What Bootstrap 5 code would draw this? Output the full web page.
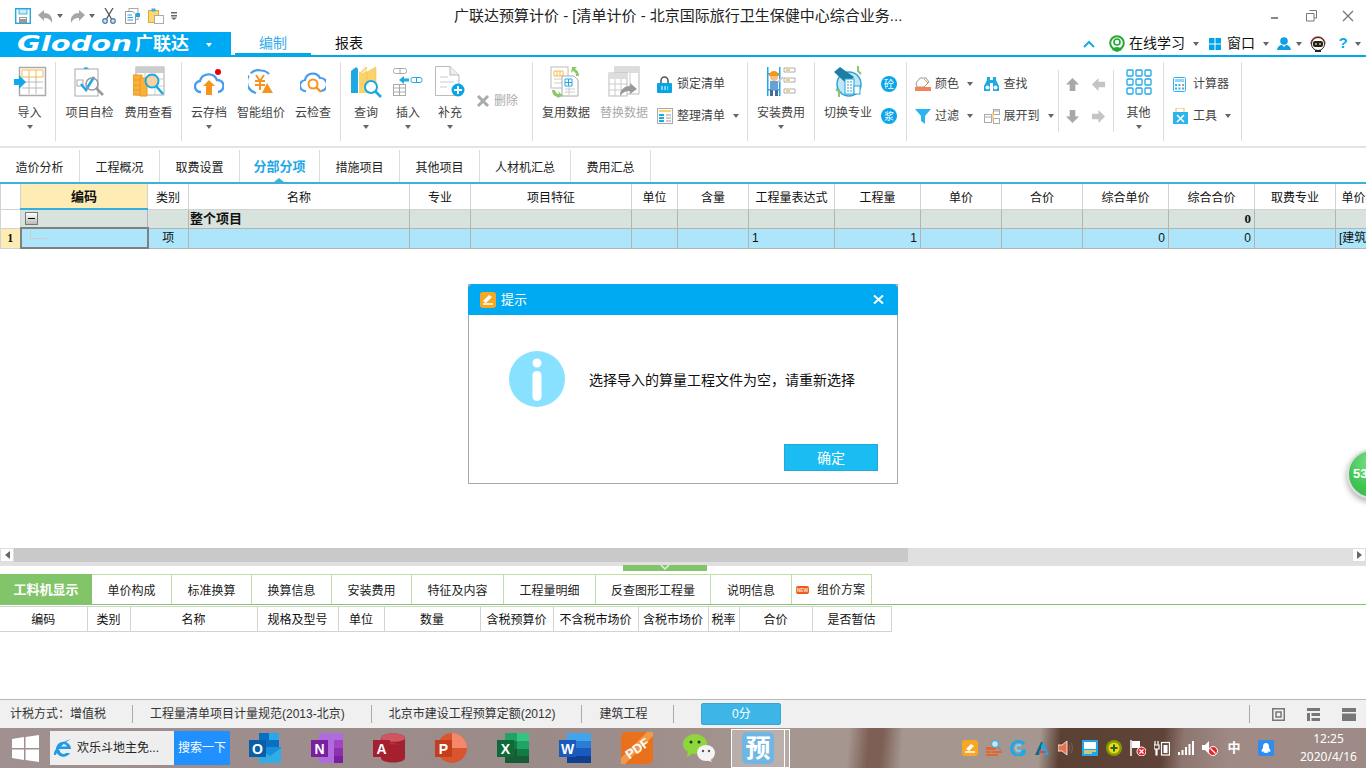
<!DOCTYPE html>
<html lang="zh-CN">
<head>
<meta charset="UTF-8">
<title>广联达预算计价</title>
<link href="https://cdn.jsdelivr.net/npm/bootstrap@5.3.0/dist/css/bootstrap.min.css" rel="stylesheet">
<style>
html, body { width: 1366px; height: 768px; overflow: hidden; margin: 0; }
body { font-family: "Liberation Sans", "Noto Sans CJK SC", sans-serif; font-size: 12px; color: #333; background: #fff; position: relative; }
svg { display: block; flex: none; }
.crt { display: inline-block; width: 0; height: 0; border-left: 3.5px solid transparent; border-right: 3.5px solid transparent; border-top: 4px solid #666; flex: none; }

.title-bar { height: 32px; flex: none; }
.qa-box { width: 454px; padding-left: 15px; flex: none; }
.qa-cell { width: 23px; }
.qa-cell-w { width: 32px; }
.title-txt { font-size: 15px; color: #222; width: 770px; white-space: nowrap; }
.win-btn { width: 36px; }

.top-tabs { height: 25px; border-bottom: 2px solid #00a9ee; flex: none; }
.logo-box { width: 231px; height: 25px; background: #00aaf2; color: #fff; padding-left: 17px; margin-bottom: -2px; flex: none; }
.logo-en { display: inline-block; font-family: "DejaVu Sans", sans-serif; font-weight: 700; font-style: italic; font-size: 21px; line-height: 25px; width: 118px; white-space: nowrap; transform: scaleX(1.38); transform-origin: left center; }
.logo-cn { font-size: 18px; font-weight: 700; line-height: 25px; width: 68px; }
.logo-box .crt { border-top-color: #fff; margin-left: 3px; }
.top-tab { width: 76px; height: 23px; font-size: 14px; line-height: 22px; text-align: center; color: #111; }
.top-tab-on { color: #35ace8; border-bottom: 2px solid #00a9ee; }
.logo-gap { width: 4px; }
.tool-right { font-size: 14px; color: #111; }
.tr-a { width: 16px; margin-right: 10px; }
.tr-b { width: 16px; margin-right: 4px; }
.tr-t1 { width: 56px; margin-right: 8px; }
.tr-b2 { margin: 0 6px 0 10px; }
.tr-t2 { width: 28px; margin-right: 8px; }
.tr-u { margin: 0 5px 0 8px; }
.tr-r { margin: 0 10px 0 8px; }
.tr-q { width: 14px; color: #00a9ee; font-weight: 700; font-size: 15px; margin-right: 5px; text-align: center; }
.tr-end { margin-right: 5px; }

.ribbon { height: 91px; border-bottom: 2px solid #e4e4e4; padding-top: 5px; flex: none; }
.rb-sep { width: 1px; height: 79px; background: #ddd; flex: none; }
.rb-sep-s { width: 1px; height: 62px; margin-top: 8px; background: #ddd; flex: none; }
.g1 { width: 55px; padding-left: 3px; }
.g2 { width: 125px; padding-left: 4px; }
.g3 { width: 158px; padding-left: 1px; }
.g4 { width: 191px; padding-left: 4px; }
.g5 { width: 214px; padding-left: 4px; }
.g6 { width: 66px; }
.g7 { width: 91px; }
.g8 { width: 151px; padding-left: 8px; }
.g9 { width: 54px; padding-left: 6px; }
.g10 { width: 49px; }
.g11 { width: 77px; padding-left: 9px; }
.rb-big { display: flex; flex-direction: column; align-items: center; color: #444; flex: none; padding-top: 3px; }
.rb-ico { height: 33px; display: flex; align-items: center; justify-content: center; }
.rb-lbl { line-height: 16px; margin-top: 7px; white-space: nowrap; }
.rb-big .crt { margin-top: 4px; }
.w53 { width: 53px; } .w59 { width: 59px; } .w52 { width: 52px; } .w42 { width: 42px; } .w58 { width: 58px; } .w66 { width: 66px; } .w49 { width: 49px; }
.rb-off { color: #aaa; }
.rb-del { width: 48px; margin-left: 5px; color: #aaa; padding-top: 30px; gap: 4px; height: 48px; }
.rb-col { display: flex; flex-direction: column; padding-top: 12px; gap: 12px; }
.rb-small { height: 20px; display: flex; align-items: center; white-space: nowrap; color: #444; }
.rs-ico { width: 20px; display: flex; justify-content: flex-start; flex: none; }
.rs-t24 { width: 24px; } .rs-t36 { width: 36px; } .rs-t48 { width: 48px; }
.rs-c { margin-left: 8px; }
.col-a { width: 70px; }
.col-b { width: 76px; }
.col-c { width: 26px; }
.col-d { width: 89px; margin-left: 4px; }
.col-e { width: 25px; }

.sheet-tabs { height: 36px; padding-top: 2px; border-bottom: 2px solid #3fb0dc; position: relative; flex: none; }
.sheet-tab { width: 80px; height: 32px; line-height: 36px; text-align: center; color: #222; border-right: 1px solid #ddd; flex: none; }
.sheet-tab-w { width: 91px; }
.sheet-tab-on { color: #1fa8e6; font-weight: 700; font-size: 13px; line-height: 33px; }
.tab-notch { position: absolute; left: 274px; bottom: 0; width: 0; height: 0; border-left: 5px solid transparent; border-right: 5px solid transparent; border-bottom: 4px solid #3fb0dc; }

.grid-wrap { height: 65px; overflow: hidden; flex: none; }
table.grid-tb { table-layout: fixed; border-collapse: collapse; width: 1419px; margin: 0; color: #111; }
table.grid-tb td { padding: 0 3px; font-size: 12px; line-height: 16px; border: 1px solid #b4b4b4; white-space: nowrap; overflow: hidden; vertical-align: middle; background: transparent; box-shadow: none; }
table.grid-tb tr.h-row td { height: 25px; padding-top: 4px; text-align: center; border-color: #d2d2d2; border-top: 0; background: #fff; }
table.grid-tb tr.h-row td.h-sel { background: #fdedb5; border-bottom: 2px solid #35aee0; font-weight: 700; font-size: 13px; padding-top: 1px; }
table.grid-tb tr.r0 td { height: 19px; background: #d9e3de; }
table.grid-tb tr.r1 td { height: 20px; background: #ade6fa; }
table.grid-tb tr.r0 td.r-h { background: #fff; border-color: #d2d2d2; }
table.grid-tb tr.r1 td.r-h { background: #fdedb5; font-family: "Liberation Serif", serif; font-weight: 700; text-align: center; border-color: #d2d2d2; padding: 0; }
table.grid-tb tr.r1 td.cur-cell { border: 2px solid #808080; padding: 0; }
table.grid-tb td.num-b { font-family: "Liberation Serif", serif; font-weight: 700; text-align: right; font-size: 13px; }
table.grid-tb td.t-r { text-align: right; }
table.grid-tb td.t-c { text-align: center; }
table.grid-tb td.t-l { font-weight: 700; font-size: 13px; padding-left: 1px; }
.tree-btn { width: 13px; height: 13px; border: 1px solid #777; background: linear-gradient(#fff, #bbb); display: flex; align-items: center; justify-content: center; margin-left: 1px; }
.tree-btn i { display: block; width: 7px; height: 1px; background: #000; }
.tree-line { display: block; width: 17px; height: 8px; margin: -6px 0 0 8px; border-left: 1px solid #ccc; border-bottom: 1px solid #ccc; }
.c1 { width: 20px; } .c2 { width: 127px; } .c3 { width: 41px; } .c4 { width: 221px; } .c5 { width: 61px; } .c6 { width: 161px; } .c7 { width: 46px; } .c8 { width: 71px; } .c9 { width: 86px; } .c10 { width: 86px; } .c11 { width: 81px; } .c12 { width: 81px; } .c13 { width: 86px; } .c14 { width: 86px; } .c15 { width: 81px; } .c16 { width: 84px; }

.grid-empty { height: 299px; flex: none; }
.hscroll { height: 14px; background: #e0e0e0; flex: none; }
.hs-btn { width: 14px; height: 14px; background: #fff; border: 1px solid #ddd; display: flex; align-items: center; justify-content: center; flex: none; }
.hs-l { border-right: 5px solid #666; border-top: 4px solid transparent; border-bottom: 4px solid transparent; }
.hs-r { border-left: 5px solid #666; border-top: 4px solid transparent; border-bottom: 4px solid transparent; }
.hs-thumb { width: 894px; height: 14px; background: #c9c9c9; }
.splitter { height: 12px; border-top: 4px solid #e0e0e0; flex: none; }
.split-handle { width: 84px; height: 6px; margin-left: 623px; margin-top: -1px; background: #82c469; display: flex; justify-content: center; }

.low-tabs { height: 31px; border-bottom: 1px solid #82c469; flex: none; }
.low-tab { height: 30px; line-height: 32px; text-align: center; color: #222; border-top: 1px solid #bce0a6; border-right: 1px solid #bce0a6; flex: none; }
.low-on { background: #82c469; color: #fff; font-weight: 700; font-size: 13px; border: 0; width: 92px; }
.lt80 { width: 80px; } .lt92 { width: 92px; } .lt115 { width: 115px; } .lt81 { width: 81px; }
.new-tag { width: 13px; height: 8px; border-radius: 2px; background: #f0591e; color: #ffe3c8; margin: 0 8px 0 4px; flex: none; font-size: 5px; font-weight: 700; line-height: 8px; text-align: center; overflow: hidden; }
.low-last { display: flex; align-items: center; line-height: 16px; }

.sub-wrap { margin-top: 1px; flex: none; }
table.sub-tb { table-layout: fixed; border-collapse: collapse; width: 891px; margin: 0; color: #111; }
table.sub-tb td { height: 25px; padding: 4px 0 0; font-size: 12px; text-align: center; border: 1px solid #d2d2d2; border-left: 0; background: transparent; white-space: nowrap; box-shadow: none; }
.s1 { width: 87px; } .s2 { width: 43px; } .s3 { width: 127px; } .s4 { width: 81px; } .s5 { width: 46px; } .s6 { width: 96px; } .s7 { width: 73px; } .s8 { width: 85px; } .s9 { width: 70px; } .s10 { width: 31px; } .s11 { width: 73px; } .s12 { width: 79px; }

.status-bar { height: 29px; background: #f0f0f0; border-top: 1px solid #b8b8b8; flex: none; color: #333; }
.st-item { padding: 0 26px 0 17px; white-space: nowrap; }
.st-first { padding-left: 10px; }
.st-sep { width: 1px; height: 18px; background: #aaa; flex: none; }
.st-score { width: 80px; height: 22px; line-height: 21px; text-align: center; background: #3db5e6; color: #fff; border: 1px solid #37a6d4; border-radius: 2px; margin-left: 27px; flex: none; }
.st-icons { gap: 22px; margin-left: 22px; margin-right: 10px; }

.task-bar { height: 40px; color: #fff; flex: none; background: linear-gradient(95deg, #a09090 0%, #9a8a88 40%, #a49590 57%, #a59790 62%, #7d5f55 63.500%, #7d5f55 64.500%, #a59790 66%, #a59790 76%, #5b4034 77.500%, #5f4338 85%, #8d7670 86.500%, #a08a85 90%, #9d8a86 100%); }
.win-logo { width: 50px; padding-left: 12px; flex: none; }
.search-box { width: 180px; height: 34px; background: #eee; color: #222; flex: none; }
.sb-ie { margin: 0 4px 0 3px; }
.sb-txt { width: 97px; font-size: 12px; white-space: nowrap; overflow: hidden; }
.sb-btn { width: 56px; height: 34px; line-height: 34px; text-align: center; color: #fff; background: #2090ff; flex: none; margin-left: auto; font-size: 12px; }
.app-cell { width: 62px; flex: none; display: flex; justify-content: center; }
.app-first { margin-left: 4px; }
.app-on { width: 54px; height: 39px; border: 1px solid #fff; background: rgba(255,255,255,.25); display: flex; align-items: center; justify-content: center; flex: none; margin-left: 1px; }
.app-yu { width: 32px; height: 32px; border-radius: 5px; background: #6fb6e3; color: #fff; font-size: 25px; font-weight: 700; line-height: 32px; text-align: center; }
.app-on-r { width: 5px; height: 39px; border: 1px solid #fff; border-left: 0; background: rgba(255,255,255,.2); flex: none; }
.tray { margin-left: auto; }
.tray-cell { width: 24px; display: flex; justify-content: center; flex: none; }
.tray-zh { font-size: 13px; font-weight: 700; line-height: 16px; text-align: center; }
.tray-qq { margin: 0 12px 0 8px; }
.clock { width: 76px; padding-left: 9px; padding-right: 8px; text-align: center; font-family: "Noto Sans", sans-serif; font-size: 12px; line-height: 18px; flex: none; }

.dlg { position: absolute; left: 468px; top: 284px; width: 430px; height: 200px; background: #fff; border: 1px solid #aaa; border-radius: 0; }
.dlg-head { height: 31px; margin: -1px -1px 0; background: #00aaf2; color: #fff; padding: 0 14px 0 12px; border: 0; border-radius: 0; font-size: 13px; }
.dlg-title { margin-left: 5px; }
.dlg-body { padding: 36px 0 0 40px; gap: 24px; }
.dlg-msg { font-size: 14px; color: #111; white-space: nowrap; padding-top: 2px; }
.dlg-ok { position: absolute; left: 315px; top: 159px; width: 94px; height: 27px; padding: 0; background: #19bdf2; border: 1px solid #2aa5d8; border-radius: 0; color: #fff; font-size: 14px; line-height: 27px; }

.ball { position: absolute; left: 1347px; top: 449px; width: 50px; height: 50px; border-radius: 50%; background: radial-gradient(circle at 50% 25%, #7fe08c, #3fc653 60%, #35b54a); border: 2px solid #ddd; box-shadow: 0 3px 6px rgba(0,0,0,.35); color: #fff; font-weight: 700; font-size: 13px; line-height: 46px; padding-left: 4px; }
</style>
</head>
<body class="d-flex flex-column">

<svg width="0" height="0" class="position-absolute">
  <defs>
    <symbol id="i-cloud" viewBox="0 0 30 24"><path d="M7 21a5.500 5.500 0 0 1-1-11 9 9 0 0 1 17-1 6 6 0 0 1 1 12" fill="none" stroke="#4a9cf0" stroke-width="2.400"/></symbol>
    <symbol id="i-arrow-up" viewBox="0 0 16 16"><path d="M8 1 15 8H11V15H5V8H1Z" fill="#a8a8a8"/></symbol>
  </defs>
</svg>

<!-- title bar -->
<div class="title-bar d-flex align-items-center">
  <div class="qa-box d-flex align-items-center">
    <div class="qa-cell">
      <svg width="16" height="16" viewBox="0 0 16 16"><rect x=".7" y=".7" width="14.600" height="14.600" fill="#fff" stroke="#21a8e0" stroke-width="1.400"/><rect x="4" y="1" width="8" height="5" fill="#cfeaf6" stroke="#21a8e0" stroke-width=".8"/><rect x="4" y="9" width="8" height="6" fill="#999"/><rect x="5" y="10" width="6" height="1" fill="#fff"/></svg>
    </div>
    <div class="qa-cell-w d-flex align-items-center gap-1">
      <svg width="15" height="13" viewBox="0 0 15 13"><path d="M0 5 6 0V3C11 3 15 6 14 13 12 9 10 8 6 8V11Z" fill="#a6a6a6"/></svg><i class="crt"></i>
    </div>
    <div class="qa-cell-w d-flex align-items-center gap-1">
      <svg width="15" height="13" viewBox="0 0 15 13"><path d="M15 5 9 0V3C4 3 0 6 1 13 3 9 5 8 9 8V11Z" fill="#a6a6a6"/></svg><i class="crt"></i>
    </div>
    <div class="qa-cell">
      <svg width="14" height="16" viewBox="0 0 14 16"><path d="M3 0 9.500 11M11 0 4.500 11" stroke="#555" stroke-width="1.300"/><circle cx="3" cy="13" r="2.300" fill="#cfe0f0" stroke="#4a7ab0" stroke-width="1.200"/><circle cx="11" cy="13" r="2.300" fill="#cfe0f0" stroke="#4a7ab0" stroke-width="1.200"/></svg>
    </div>
    <div class="qa-cell">
      <svg width="16" height="16" viewBox="0 0 16 16"><rect x="4" y=".5" width="9" height="11" fill="#fff" stroke="#aaa"/><path d="M.5 3.500H8L10.500 6V15.500H.5Z" fill="#fff" stroke="#999"/><path d="M2.500 7H7M2.500 9.500H8M2.500 12H8" stroke="#1fa8e6" stroke-width="1.200"/><path d="M11 5 15 5 15 9 11 9Z" fill="#1fa8e6"/></svg>
    </div>
    <div class="qa-cell">
      <svg width="16" height="16" viewBox="0 0 16 16"><rect x=".5" y="2.500" width="10" height="12" fill="#fcd873" stroke="#d9a93a"/><rect x="3.500" y=".5" width="4" height="3" fill="#35aee0"/><rect x="6.500" y="7.500" width="9" height="8" fill="#fff" stroke="#aaa"/></svg>
    </div>
    <svg width="6" height="8" viewBox="0 0 6 8"><path d="M0 0H6V1.500H0ZM0 3H6V4.500H0ZM0 5.500H6L3 8Z" fill="#666"/></svg>
  </div>
  <div class="title-txt">广联达预算计价 - [清单计价 - 北京国际旅行卫生保健中心综合业务...</div>
  <div class="d-flex align-items-center ms-auto">
    <div class="win-btn d-flex justify-content-center"><svg width="10" height="10" viewBox="0 0 10 10"><rect y="6" width="7" height="2" fill="#888"/></svg></div>
    <div class="win-btn d-flex justify-content-center"><svg width="12" height="12" viewBox="0 0 12 12"><path d="M3.500.5H10.500V8H8M.5 3.500H8V11H.5Z" fill="none" stroke="#777"/></svg></div>
    <div class="win-btn d-flex justify-content-center"><svg width="12" height="12" viewBox="0 0 12 12"><path d="M1 1 11 11M11 1 1 11" stroke="#777" stroke-width="1.300"/></svg></div>
  </div>
</div>

<!-- product logo + top tabs -->
<div class="top-tabs d-flex align-items-center">
  <div class="logo-box d-flex align-items-center">
    <span class="logo-en">Glodon</span><span class="logo-cn">广联达</span><i class="crt"></i>
  </div>
  <div class="logo-gap"></div>
  <div class="top-tab top-tab-on">编制</div>
  <div class="top-tab">报表</div>
  <div class="tool-right d-flex align-items-center ms-auto">
    <div class="tr-a"><svg width="12" height="8" viewBox="0 0 12 8"><path d="M1 7 6 2 11 7" fill="none" stroke="#1fa8e6" stroke-width="2"/></svg></div>
    <div class="tr-b"><svg width="16" height="17" viewBox="0 0 16 17"><circle cx="8" cy="8" r="6.800" fill="none" stroke="#22a833" stroke-width="2"/><circle cx="8" cy="7" r="3" fill="none" stroke="#22a833" stroke-width="1.600"/><path d="M3 15C5 11 11 11 13 15L8 17Z" fill="#22a833"/></svg></div>
    <span class="tr-t1">在线学习</span><i class="crt"></i>
    <div class="tr-b2"><svg width="12" height="12" viewBox="0 0 12 12"><path d="M0 0H5.500V5.500H0ZM6.500 0H12V5.500H6.500ZM0 6.500H5.500V12H0ZM6.500 6.500H12V12H6.500Z" fill="#00a4ea"/></svg></div>
    <span class="tr-t2">窗口</span><i class="crt"></i>
    <div class="tr-u"><svg width="14" height="13" viewBox="0 0 14 13"><circle cx="7" cy="4" r="3.800" fill="#0f9fe6"/><path d="M0 13C1 8 4 8 5 8L7 10 9 8C10 8 13 8 14 13Z" fill="#0f9fe6"/></svg></div><i class="crt"></i>
    <div class="tr-r"><svg width="16" height="16" viewBox="0 0 16 16"><path d="M1 8A7 7 0 0 1 15 8" fill="none" stroke="#c0392b" stroke-width="1.400"/><circle cx="8" cy="8" r="6.500" fill="#fff" stroke="#222"/><rect x="3" y="5" width="10" height="6" rx="2" fill="#222"/><circle cx="6" cy="8" r="1" fill="#f4c430"/><circle cx="10" cy="8" r="1" fill="#f4c430"/><rect x="5" y="14" width="6" height="2" fill="#222"/></svg></div>
    <span class="tr-q">?</span><i class="crt tr-end"></i>
  </div>
</div>

<!-- ribbon -->
<div class="ribbon d-flex">
  <div class="g1 d-flex">
    <div class="rb-big w53">
      <div class="rb-ico"><svg width="34" height="32" viewBox="0 0 34 32"><rect x="6.500" y="1.500" width="26" height="28" fill="#fff" stroke="#aaa" stroke-width="1.500"/><path d="M9 4H30V11H9Z" fill="#fff" stroke="#f7b94a"/><path d="M16 4V11M23 4V11" stroke="#f7b94a"/><path d="M9 16H30M9 22H30M16 11V28M23 11V28" stroke="#bbb"/><path d="M1 13H6V9L13 16 6 23V19H1Z" fill="#11a7ea"/></svg></div>
      <div class="rb-lbl">导入</div><i class="crt"></i>
    </div>
  </div>
  <div class="rb-sep"></div>
  <div class="g2 d-flex">
    <div class="rb-big w59">
      <div class="rb-ico"><svg width="32" height="32" viewBox="0 0 32 32"><rect x="1" y="3" width="23" height="27" fill="#fff" stroke="#aaa"/><path d="M9 3Q12-1 15 3Z" fill="#35aee0"/><rect x="3" y="14" width="6" height="6" fill="none" stroke="#aaa"/><path d="M7 18 12 24 20 11" fill="none" stroke="#1fa8e6" stroke-width="2.500"/><circle cx="18" cy="18" r="6" fill="none" stroke="#999" stroke-width="1.600"/><path d="M22 22 29 29" stroke="#999" stroke-width="2.500"/></svg></div>
      <div class="rb-lbl">项目自检</div>
    </div>
    <div class="rb-big w59">
      <div class="rb-ico"><svg width="32" height="32" viewBox="0 0 32 32"><rect x="3" y="1" width="28" height="28" fill="#fff" stroke="#aaa"/><rect x="3" y="1" width="28" height="6" fill="#ccc"/><path d="M3 13H31M3 20H31M12 7V29M22 7V29" stroke="#ccc"/><path d="M0 9H9V29H0Z" fill="#fbb03b" stroke="#e59a1e"/><path d="M0 14H9M0 19H9M0 24H9" stroke="#e59a1e"/><path d="M7 12H14V30H7Z" fill="#fbb03b" stroke="#e59a1e"/><circle cx="19" cy="15" r="6.500" fill="#f7d3a4" stroke="#19a8e0" stroke-width="2"/><path d="M23 20 30 28" stroke="#19a8e0" stroke-width="2.600"/></svg></div>
      <div class="rb-lbl">费用查看</div>
    </div>
  </div>
  <div class="rb-sep"></div>
  <div class="g3 d-flex">
    <div class="rb-big w52">
      <div class="rb-ico"><svg width="30" height="28" viewBox="0 0 30 28"><use href="#i-cloud" y="3" width="30" height="24"/><path d="M15 12 21 18H18V27H12V18H9Z" fill="#f7941d"/><circle cx="24" cy="4" r="3" fill="#e60012"/></svg></div>
      <div class="rb-lbl">云存档</div><i class="crt"></i>
    </div>
    <div class="rb-big w52">
      <div class="rb-ico"><svg width="26" height="26" viewBox="0 0 26 26"><path d="M8 24A11.500 11.500 0 0 1 13 1.500 11 11 0 0 1 21 5" fill="none" stroke="#4a9cf0" stroke-width="2.200" stroke-dasharray="22 3"/><path d="M8 6 12 12 16 6M7 12H17M7 16H17M12 12V21" fill="none" stroke="#f7941d" stroke-width="2"/><path d="M19 14 25 24H14Z" fill="#f7941d"/></svg></div>
      <div class="rb-lbl">智能组价</div>
    </div>
    <div class="rb-big w52">
      <div class="rb-ico"><svg width="26" height="22" viewBox="0 0 26 22"><path d="M6 20A5 5 0 0 1 5 9 8 8 0 0 1 20 7 6.500 6.500 0 0 1 21 20" fill="none" stroke="#4a9cf0" stroke-width="2.200"/><circle cx="13" cy="13" r="4.500" fill="#fff" stroke="#f7941d" stroke-width="2"/><path d="M16 16 21 21" stroke="#f7941d" stroke-width="2.400"/></svg></div>
      <div class="rb-lbl">云检查</div>
    </div>
  </div>
  <div class="rb-sep"></div>
  <div class="g4 d-flex">
    <div class="rb-big w42">
      <div class="rb-ico"><svg width="32" height="32" viewBox="0 0 32 32"><path d="M1 5 6 1 8 3V27H1Z" fill="#1fa8e6"/><path d="M9 6 15 1H17V27H9Z" fill="#fbd36b"/><path d="M17 6 26 1V20H17Z" fill="#fbd36b" stroke="#e5b84a" stroke-width=".5"/><path d="M10 6 15 2M12 7 18 3" stroke="#fff"/><circle cx="21" cy="21" r="6" fill="#fff" stroke="#19a8e0" stroke-width="2"/><path d="M25 25 31 31" stroke="#19a8e0" stroke-width="2.600"/></svg></div>
      <div class="rb-lbl">查询</div><i class="crt"></i>
    </div>
    <div class="rb-big w42">
      <div class="rb-ico"><svg width="30" height="28" viewBox="0 0 30 28"><rect x=".5" y=".5" width="13" height="5" rx="2" fill="#fff" stroke="#aaa"/><path d="M7 1V5" stroke="#aaa"/><rect x="18" y="9.500" width="11" height="5" rx="2" fill="#fff" stroke="#1fa8e6"/><path d="M23.500 10V14" stroke="#1fa8e6"/><path d="M6 12 11 8V10.500H16V13.500H11V16Z" fill="#1fa8e6"/><rect x=".5" y="16.500" width="12" height="11" fill="#fff" stroke="#aaa"/><path d="M1 20H12M1 24H12M6.500 17V27" stroke="#aaa"/></svg></div>
      <div class="rb-lbl">插入</div><i class="crt"></i>
    </div>
    <div class="rb-big w42">
      <div class="rb-ico"><svg width="30" height="32" viewBox="0 0 30 32"><path d="M.5.500H15L24 9V29.500H.5Z" fill="#fff" stroke="#bbb"/><path d="M15 .5V9H24" fill="#eee" stroke="#bbb"/><path d="M5 11H13M5 16H19M5 21H12" stroke="#ddd" stroke-width="1.500"/><circle cx="23" cy="24" r="6.500" fill="#08a4e8"/><path d="M23 20V28M19 24H27" stroke="#fff" stroke-width="2"/></svg></div>
      <div class="rb-lbl">补充</div><i class="crt"></i>
    </div>
    <div class="rb-del d-flex align-items-center">
      <svg width="14" height="14" viewBox="0 0 14 14"><path d="M2 2 12 12M12 2 2 12" stroke="#aaa" stroke-width="3"/></svg>
      <span>删除</span>
    </div>
  </div>
  <div class="rb-sep"></div>
  <div class="g5 d-flex">
    <div class="rb-big w58">
      <div class="rb-ico"><svg width="32" height="32" viewBox="0 0 32 32"><rect x="1" y="1" width="17" height="21" fill="#fff" stroke="#bbb"/><path d="M4 5H13V10H4ZM7 5V10M10 5V10" fill="none" stroke="#f7b94a"/><path d="M4 13H14M4 17H14" stroke="#ccc"/><path d="M12 10H24L28 14V30H12Z" fill="#fff" stroke="#aaa"/><path d="M15 13H22V20H15ZM18.500 13V20M15 16.500H22" fill="none" stroke="#1fa8e6"/><path d="M15 23H25M15 26H25M19 20V29" stroke="#ccc"/><path d="M22 1 27 1 25 3C27 4 29 6 29 10H26C26 7 25 6 23 5L21 7Z" fill="#8cc76b"/><path d="M2 24H5C5 26 7 28 9 28L8 25 13 30 7 32 8 31C4 31 2 27 2 24Z" fill="#8cc76b"/></svg></div>
      <div class="rb-lbl">复用数据</div>
    </div>
    <div class="rb-big w58 rb-off">
      <div class="rb-ico"><svg width="32" height="32" viewBox="0 0 32 32"><rect x="7" y="1" width="24" height="27" fill="#fff" stroke="#bbb"/><rect x="7" y="1" width="24" height="6" fill="#ddd"/><rect x="1" y="7" width="18" height="23" fill="#fff" stroke="#bbb"/><rect x="1" y="7" width="18" height="6" fill="#ddd"/><path d="M1 18H19M1 24H19M7 13V30M13 13V30M22 7V28" stroke="#ccc"/><path d="M12 30C12 23 17 20 22 20V17L29 23 22 28V25C18 25 15 26 12 30Z" fill="#999"/></svg></div>
      <div class="rb-lbl">替换数据</div>
    </div>
    <div class="rb-col col-d">
      <div class="rb-small"><div class="rs-ico"><svg width="15" height="17" viewBox="0 0 15 17"><path d="M4 7V4.500A3.500 3.500 0 0 1 11 4.500V7" fill="none" stroke="#555" stroke-width="1.500"/><rect y="7" width="15" height="10" rx="1" fill="#08a4e8"/><path d="M4 11H11M4 13H11" stroke="#fff" stroke-dasharray="2 1"/></svg></div><span class="rs-t48">锁定清单</span></div>
      <div class="rb-small"><div class="rs-ico"><svg width="16" height="16" viewBox="0 0 16 16"><rect x=".5" y=".5" width="15" height="15" fill="#fff" stroke="#aaa"/><rect x="2" y="2" width="12" height="2" fill="#fbd36b"/><path d="M2 6H7V8H2ZM2 9H7V11H2ZM2 12H7V14H2Z" fill="#1fa8e6"/><path d="M9 6H14V8H9ZM9 9H14V11H9ZM9 12H14V14H9Z" fill="#ccc"/></svg></div><span class="rs-t48">整理清单</span><i class="crt rs-c"></i></div>
    </div>
  </div>
  <div class="rb-sep"></div>
  <div class="g6 d-flex">
    <div class="rb-big w66">
      <div class="rb-ico"><svg width="30" height="30" viewBox="0 0 30 30"><path d="M1 0H2.500V29H1ZM13 0H14.500V29H13ZM1 6H14.500V7.500H1ZM1 22H14.500V23.500H1Z" fill="#1fa8e6"/><circle cx="8" cy="10" r="4" fill="#f7c08a"/><path d="M3 9A5 5 0 0 1 13 9Z" fill="#f7941d"/><rect x="4" y="14" width="8" height="9" fill="#6a9fd8"/><path d="M4 23H7V29H4ZM9 23H12V29H9Z" fill="#4a6a9a"/><path d="M12 15 17 10" stroke="#ccc" stroke-width="2"/><path d="M18 1H29V5H18ZM18 11H29V15H18ZM18 22H29V26H18Z" fill="#fff" stroke="#999" stroke-width=".8"/><path d="M20 3H24M20 13H24M20 24H24" stroke="#f7b94a" stroke-width="1.500"/></svg></div>
      <div class="rb-lbl">安装费用</div><i class="crt"></i>
    </div>
  </div>
  <div class="rb-sep"></div>
  <div class="g7 d-flex">
    <div class="rb-big w66">
      <div class="rb-ico"><svg width="32" height="32" viewBox="0 0 32 32"><circle cx="17" cy="18" r="12" fill="#bfe7f7" stroke="#2aa5d8" stroke-width="1.500"/><path d="M2 6 8 1 22 11 15 18Z" fill="#1d7ea3"/><rect x="13" y="13" width="9" height="15" fill="#fff" stroke="#2aa5d8"/><rect x="22" y="20" width="6" height="8" fill="#fff" stroke="#2aa5d8"/><path d="M15 16H20M15 19H20M15 22H20M15 25H20" stroke="#2aa5d8" stroke-dasharray="2 1"/><path d="M26 0V5L29 8" fill="none" stroke="#8cc76b" stroke-width="2"/><path d="M7 31V26L4 23" fill="none" stroke="#8cc76b" stroke-width="2"/></svg></div>
      <div class="rb-lbl">切换专业</div>
    </div>
    <div class="rb-col col-e">
      <div class="rb-small"><svg width="16" height="16" viewBox="0 0 16 16"><circle cx="8" cy="8" r="8" fill="#0aa5ea"/><text x="8" y="11.500" font-size="10" fill="#fff" text-anchor="middle" font-family="Noto Sans CJK SC">砼</text></svg></div>
      <div class="rb-small"><svg width="16" height="16" viewBox="0 0 16 16"><circle cx="8" cy="8" r="8" fill="#0aa5ea"/><text x="8" y="11.500" font-size="10" fill="#fff" text-anchor="middle" font-family="Noto Sans CJK SC">浆</text></svg></div>
    </div>
  </div>
  <div class="rb-sep"></div>
  <div class="g8 d-flex">
    <div class="rb-col col-a">
      <div class="rb-small"><div class="rs-ico"><svg width="16" height="16" viewBox="0 0 16 16"><path d="M5 2 11 2 14 6 9 11H2L1 7Z" fill="#fff" stroke="#999"/><path d="M9 3 13 7" stroke="#f7941d"/><rect y="11" width="16" height="4" fill="#f5835a"/></svg></div><span class="rs-t24">颜色</span><i class="crt rs-c"></i></div>
      <div class="rb-small"><div class="rs-ico"><svg width="16" height="15" viewBox="0 0 16 15"><path d="M0 0H16L10 7V15L6 12V7Z" fill="#2cb4ee"/></svg></div><span class="rs-t24">过滤</span><i class="crt rs-c"></i></div>
    </div>
    <div class="rb-col col-b">
      <div class="rb-small"><div class="rs-ico"><svg width="15" height="14" viewBox="0 0 15 14"><path d="M3 0H6V3H9V0H12V3L15 9V14H9V6H6V14H0V9L3 3Z" fill="#1fa8e6"/><circle cx="3.500" cy="10.500" r="2" fill="#fff"/><circle cx="11.500" cy="10.500" r="2" fill="#fff"/></svg></div><span class="rs-t24">查找</span></div>
      <div class="rb-small"><div class="rs-ico"><svg width="16" height="15" viewBox="0 0 16 15"><rect x=".5" y="5.500" width="7" height="8" fill="#fff" stroke="#aaa"/><rect x="9.500" y=".5" width="6" height="5" fill="#fff" stroke="#aaa"/><rect x="9.500" y="9.500" width="6" height="5" fill="#fff" stroke="#aaa"/><path d="M0 8H8M10 2H15" stroke="#aaa"/><path d="M7 8H9V3M9 12V8" fill="none" stroke="#f7b94a"/></svg></div><span class="rs-t36">展开到</span><i class="crt rs-c"></i></div>
    </div>
  </div>
  <div class="rb-sep-s"></div>
  <div class="g9 d-flex">
    <div class="rb-col col-c">
      <div class="rb-small"><svg width="15" height="15" viewBox="0 0 16 16"><use href="#i-arrow-up" width="16" height="16"/></svg></div>
      <div class="rb-small"><svg width="15" height="15" viewBox="0 0 16 16"><path d="M8 15 1 8H5V1H11V8H15Z" fill="#a8a8a8"/></svg></div>
    </div>
    <div class="rb-col">
      <div class="rb-small"><svg width="15" height="15" viewBox="0 0 16 16"><path d="M1 8 8 1V5H15V11H8V15Z" fill="#c4c4c4"/></svg></div>
      <div class="rb-small"><svg width="15" height="15" viewBox="0 0 16 16"><path d="M15 8 8 1V5H1V11H8V15Z" fill="#c4c4c4"/></svg></div>
    </div>
  </div>
  <div class="rb-sep-s"></div>
  <div class="g10 d-flex">
    <div class="rb-big w49">
      <div class="rb-ico"><svg width="26" height="26" viewBox="0 0 26 26"><g fill="none" stroke="#1fa8e6" stroke-width="1.300"><rect x="1" y="1" width="6" height="6" rx="1"/><rect x="10" y="1" width="6" height="6" rx="1"/><rect x="19" y="1" width="6" height="6" rx="1"/><rect x="1" y="10" width="6" height="6" rx="1"/><rect x="10" y="10" width="6" height="6" rx="1"/><rect x="19" y="10" width="6" height="6" rx="1"/><rect x="1" y="19" width="6" height="6" rx="1"/><rect x="10" y="19" width="6" height="6" rx="1"/><rect x="19" y="19" width="6" height="6" rx="1"/></g></svg></div>
      <div class="rb-lbl">其他</div><i class="crt"></i>
    </div>
  </div>
  <div class="rb-sep"></div>
  <div class="g11">
    <div class="rb-col">
      <div class="rb-small"><div class="rs-ico"><svg width="13" height="15" viewBox="0 0 13 15"><rect x=".5" y=".5" width="12" height="14" rx="1" fill="#fff" stroke="#2cb4ee"/><rect x="2" y="2" width="9" height="3" fill="#8fd8f7"/><path d="M2 7H4V9H2ZM5.500 7H7.500V9H5.500ZM2 10.500H4V12.500H2ZM5.500 10.500H7.500V12.500H5.500ZM9 10.500H11V12.500H9Z" fill="#2cb4ee"/><rect x="9" y="7" width="2" height="2" fill="#f5835a"/></svg></div><span class="rs-t36">计算器</span></div>
      <div class="rb-small"><div class="rs-ico"><svg width="15" height="16" viewBox="0 0 15 16"><rect x="3" y="0" width="8" height="8" fill="#fff" stroke="#f7b94a"/><rect y="4" width="15" height="12" fill="#2cb4ee"/><path d="M4 7 11 14M11 7 4 14" stroke="#fff" stroke-width="1.600"/></svg></div><span class="rs-t24">工具</span><i class="crt rs-c"></i></div>
    </div>
  </div>
  <div class="rb-sep"></div>
</div>

<!-- sheet tabs -->
<div class="sheet-tabs d-flex">
  <div class="sheet-tab">造价分析</div>
  <div class="sheet-tab">工程概况</div>
  <div class="sheet-tab">取费设置</div>
  <div class="sheet-tab sheet-tab-on">分部分项</div>
  <div class="sheet-tab">措施项目</div>
  <div class="sheet-tab">其他项目</div>
  <div class="sheet-tab sheet-tab-w">人材机汇总</div>
  <div class="sheet-tab">费用汇总</div>
  <span class="tab-notch"></span>
</div>

<!-- main grid -->
<div class="grid-wrap">
  <table class="table grid-tb">
    <colgroup><col class="c1"><col class="c2"><col class="c3"><col class="c4"><col class="c5"><col class="c6"><col class="c7"><col class="c8"><col class="c9"><col class="c10"><col class="c11"><col class="c12"><col class="c13"><col class="c14"><col class="c15"><col class="c16"></colgroup>
    <tbody>
      <tr class="h-row"><td></td><td class="h-sel">编码</td><td>类别</td><td>名称</td><td>专业</td><td>项目特征</td><td>单位</td><td>含量</td><td>工程量表达式</td><td>工程量</td><td>单价</td><td>合价</td><td>综合单价</td><td>综合合价</td><td>取费专业</td><td>单价构成文件</td></tr>
      <tr class="r0"><td class="r-h"></td><td><span class="tree-btn"><i></i></span></td><td></td><td class="t-l">整个项目</td><td></td><td></td><td></td><td></td><td></td><td></td><td></td><td></td><td></td><td class="num-b">0</td><td></td><td></td></tr>
      <tr class="r1"><td class="r-h">1</td><td class="cur-cell"><span class="tree-line"></span></td><td class="t-c">项</td><td></td><td></td><td></td><td></td><td></td><td>1</td><td class="t-r">1</td><td></td><td></td><td class="t-r">0</td><td class="t-r">0</td><td></td><td>[建筑工程]</td></tr>
    </tbody>
  </table>
</div>

<div class="grid-empty"></div>

<!-- horizontal scrollbar -->
<div class="hscroll d-flex">
  <div class="hs-btn"><i class="hs-l"></i></div>
  <div class="hs-thumb"></div>
  <div class="hs-btn ms-auto"><i class="hs-r"></i></div>
</div>
<div class="splitter">
  <div class="split-handle"><svg width="12" height="6" viewBox="0 0 12 6"><path d="M2 0 6 4 10 0" fill="none" stroke="#e3f3da" stroke-width="1.500"/></svg></div>
</div>

<!-- lower tabs -->
<div class="low-tabs d-flex">
  <div class="low-tab low-on">工料机显示</div>
  <div class="low-tab lt80">单价构成</div>
  <div class="low-tab lt80">标准换算</div>
  <div class="low-tab lt80">换算信息</div>
  <div class="low-tab lt80">安装费用</div>
  <div class="low-tab lt92">特征及内容</div>
  <div class="low-tab lt92">工程量明细</div>
  <div class="low-tab lt115">反查图形工程量</div>
  <div class="low-tab lt81">说明信息</div>
  <div class="low-tab lt80 low-last"><span class="new-tag">NEW</span><span>组价方案</span></div>
</div>

<div class="sub-wrap">
  <table class="table sub-tb">
    <colgroup><col class="s1"><col class="s2"><col class="s3"><col class="s4"><col class="s5"><col class="s6"><col class="s7"><col class="s8"><col class="s9"><col class="s10"><col class="s11"><col class="s12"></colgroup>
    <tbody><tr><td>编码</td><td>类别</td><td>名称</td><td>规格及型号</td><td>单位</td><td>数量</td><td>含税预算价</td><td>不含税市场价</td><td>含税市场价</td><td>税率</td><td>合价</td><td>是否暂估</td></tr></tbody>
  </table>
</div>

<div class="flex-grow-1"></div>

<!-- status bar -->
<div class="status-bar d-flex align-items-center">
  <div class="st-item st-first">计税方式：增值税</div><div class="st-sep"></div>
  <div class="st-item">工程量清单项目计量规范(2013-北京)</div><div class="st-sep"></div>
  <div class="st-item">北京市建设工程预算定额(2012)</div><div class="st-sep"></div>
  <div class="st-item">建筑工程</div><div class="st-sep"></div>
  <div class="st-score">0分</div>
  <div class="st-sep ms-auto"></div>
  <div class="d-flex align-items-center st-icons">
    <svg width="13" height="13" viewBox="0 0 13 13"><rect x=".75" y=".75" width="11.500" height="11.500" fill="none" stroke="#777" stroke-width="1.500"/><rect x="4" y="4" width="5" height="5" fill="none" stroke="#777" stroke-width="1.500"/></svg>
    <svg width="13" height="13" viewBox="0 0 13 13"><path d="M0 0H13V3H0ZM0 5H3V13H0ZM4.500 5H13V8H4.500ZM4.500 10H13V13H4.500Z" fill="#777"/></svg>
    <svg width="14" height="13" viewBox="0 0 14 13"><path d="M0 0H14V4H0ZM0 5.500H14V13H0Z" fill="#777"/></svg>
  </div>
</div>

<!-- windows taskbar -->
<div class="task-bar d-flex align-items-center">
  <div class="win-logo"><svg width="27" height="27" viewBox="0 0 27 27"><path d="M0 4 12 2V13H0ZM13.500 2 27 0V13H13.500ZM0 14.500H12V25L0 23ZM13.500 14.500H27V27L13.500 25Z" fill="#fff"/></svg></div>
  <div class="search-box d-flex align-items-center">
    <div class="sb-ie"><svg width="20" height="20" viewBox="0 0 20 20"><path d="M3 11H18A7.500 7.500 0 1 0 17 15H13A4 4 0 0 1 6.500 12M7 8.500C7.500 5 13 5 14 8.500Z" fill="#1d9be8" fill-rule="evenodd"/><path d="M1 17C0 12 8 4 18 1 12 4 5 10 3 17Z" fill="#1d9be8"/></svg></div>
    <span class="sb-txt">欢乐斗地主免...</span>
    <div class="sb-btn">搜索一下</div>
  </div>
  <div class="app-cell app-first"><svg width="32" height="30" viewBox="0 0 32 30"><path d="M10 0H30V14H10Z" fill="#0a6fc2"/><path d="M20 0H30V7H20Z" fill="#28a8ea"/><path d="M10 14 32 14V30H10Z" fill="#1490df"/><path d="M10 15 21 23 32 15V30H10Z" fill="#50c8f0" fill-opacity=".5"/><rect y="7" width="17" height="17" fill="#0a5ea8"/><text x="8.500" y="20.500" font-size="14" font-weight="700" fill="#fff" text-anchor="middle" font-family="Liberation Sans">O</text></svg></div>
  <div class="app-cell"><svg width="32" height="30" viewBox="0 0 32 30"><path d="M8 0H32V30H8Z" fill="#b06cdc"/><path d="M23 7H32V15H23Z" fill="#a046c4"/><path d="M23 15H32V23H23Z" fill="#8c30b0"/><path d="M23 23H32V30H23Z" fill="#7a1fa0"/><rect y="7" width="17" height="17" fill="#7a1fa0"/><text x="8.500" y="20.500" font-size="14" font-weight="700" fill="#fff" text-anchor="middle" font-family="Liberation Sans">N</text></svg></div>
  <div class="app-cell"><svg width="32" height="30" viewBox="0 0 32 30"><path d="M8 5C8-1 32-1 32 5V25C32 31 8 31 8 25Z" fill="#a4202e"/><path d="M8 5C8-1 32-1 32 5 32 10 8 10 8 5Z" fill="#cf5560"/><path d="M8 5C8 10 32 10 32 15 32 10 8 10 8 15Z" fill="#c03040"/><rect y="7" width="17" height="17" fill="#a4202e"/><text x="8.500" y="20.500" font-size="14" font-weight="700" fill="#fff" text-anchor="middle" font-family="Liberation Sans">A</text></svg></div>
  <div class="app-cell"><svg width="32" height="30" viewBox="0 0 32 30"><circle cx="17" cy="15" r="15" fill="#d9552f"/><path d="M17 0A15 15 0 0 1 32 15H17Z" fill="#f5876a"/><rect y="7" width="17" height="17" fill="#c43e1c"/><text x="8.500" y="20.500" font-size="14" font-weight="700" fill="#fff" text-anchor="middle" font-family="Liberation Sans">P</text></svg></div>
  <div class="app-cell"><svg width="32" height="30" viewBox="0 0 32 30"><path d="M8 0H20V8H8Z" fill="#21a366"/><path d="M20 0H32V8H20Z" fill="#33c481"/><path d="M8 8H20V16H8Z" fill="#107c41"/><path d="M20 8H32V16H20Z" fill="#21a366"/><path d="M8 16H20V23H8Z" fill="#185c37"/><path d="M20 16H32V23H20Z" fill="#107c41"/><path d="M8 23H32V30H8Z" fill="#185c37"/><rect y="7" width="17" height="17" fill="#0e6a38"/><text x="8.500" y="20.500" font-size="14" font-weight="700" fill="#fff" text-anchor="middle" font-family="Liberation Sans">X</text></svg></div>
  <div class="app-cell"><svg width="32" height="30" viewBox="0 0 32 30"><path d="M8 0H32V8H8Z" fill="#41a5ee"/><path d="M8 8H32V15H8Z" fill="#2b7cd3"/><path d="M8 15H32V23H8Z" fill="#185abd"/><path d="M8 23H32V30H8Z" fill="#103f91"/><rect y="7" width="17" height="17" fill="#185abd"/><text x="8.500" y="20.500" font-size="14" font-weight="700" fill="#fff" text-anchor="middle" font-family="Liberation Sans">W</text></svg></div>
  <div class="app-cell"><svg width="32" height="32" viewBox="0 0 32 32"><rect width="32" height="32" rx="5" fill="#e9711c"/><path d="M0 26 26 0H32V4L4 32H0Z" fill="#f39a4a"/><text x="16" y="21" font-size="13" font-weight="700" fill="#fff" text-anchor="middle" font-family="Liberation Sans" transform="rotate(-35 16 16)">PDF</text></svg></div>
  <div class="app-cell"><svg width="32" height="28" viewBox="0 0 32 28"><ellipse cx="12" cy="10" rx="12" ry="10" fill="#8ed639"/><path d="M5 17 4 23 11 19Z" fill="#8ed639"/><circle cx="8" cy="8" r="1.500" fill="#234"/><circle cx="16" cy="8" r="1.500" fill="#234"/><ellipse cx="23" cy="19" rx="9" ry="8" fill="#f4f4f4"/><path d="M27 25 29 28 23 26Z" fill="#f4f4f4"/><circle cx="20" cy="17" r="1.200" fill="#555"/><circle cx="26" cy="17" r="1.200" fill="#555"/></svg></div>
  <div class="app-on"><div class="app-yu">预</div></div>
  <div class="app-on-r"></div>
  <div class="tray d-flex align-items-center">
    <div class="tray-cell"><svg width="16" height="16" viewBox="0 0 16 16"><rect width="16" height="16" rx="3" fill="#f7a823"/><path d="M4 9 9 4 12 6 7 11Z" fill="#fff"/><path d="M3 12H13" stroke="#fff" stroke-width="1.500"/></svg></div>
    <div class="tray-cell"><svg width="16" height="16" viewBox="0 0 16 16"><path d="M0 7H10V10H0ZM0 11H5V13H0ZM6 11H16V13H6ZM0 14H12V16H0Z" fill="#e8652a"/><circle cx="9" cy="4" r="3.500" fill="#bfe7f7" stroke="#2aa5d8"/><path d="M12 7 15 10" stroke="#888" stroke-width="1.500"/></svg></div>
    <div class="tray-cell"><svg width="16" height="16" viewBox="0 0 16 16"><path d="M14 4A7 7 0 1 0 15 11H9" fill="none" stroke="#1fa8e6" stroke-width="3"/><path d="M11 6A3 3 0 1 0 11 10" fill="none" stroke="#7fd0f5" stroke-width="2"/></svg></div>
    <div class="tray-cell"><svg width="14" height="15" viewBox="0 0 14 15"><path d="M0 14 6 1H8L4 14Z" fill="#0a6e8a"/><path d="M8 1 14 14H10L6 5Z" fill="#1fa8e6"/><path d="M4 10H11V12H4Z" fill="#d45"/></svg></div>
    <div class="tray-cell"><svg width="16" height="16" viewBox="0 0 16 16"><path d="M0 5H4L9 1V15L4 11H0Z" fill="#e8714f" stroke="#fff" stroke-width=".8"/><path d="M11 5Q13 8 11 11M13 3Q16 8 13 13" fill="none" stroke="#7d5a4e" stroke-width="1.200"/></svg></div>
    <div class="tray-cell"><svg width="16" height="16" viewBox="0 0 16 16"><rect width="16" height="16" fill="#1fa8e6"/><rect x="2" y="2" width="12" height="7" fill="#fff"/><path d="M2 11H14M2 13H10" stroke="#fbd36b" stroke-width="1.500"/></svg></div>
    <div class="tray-cell"><svg width="16" height="16" viewBox="0 0 16 16"><circle cx="8" cy="8" r="8" fill="#7f9d00"/><circle cx="8" cy="8" r="5.500" fill="#f6d31a"/><path d="M8 4.500V11.500M4.500 8H11.500" stroke="#1e6c1e" stroke-width="2"/></svg></div>
    <div class="tray-cell"><svg width="16" height="16" viewBox="0 0 16 16"><path d="M1 0V16" stroke="#fff" stroke-width="1.500"/><path d="M2 1H10V8H2Z" fill="#fff"/><circle cx="11.500" cy="11.500" r="4.500" fill="#e0262c" stroke="#fff"/><path d="M9.500 9.500 13.500 13.500M13.500 9.500 9.500 13.500" stroke="#fff" stroke-width="1.300"/></svg></div>
    <div class="tray-cell"><svg width="16" height="16" viewBox="0 0 16 16"><path d="M1 1V5M4 1V5M0 5H5V9H3V15H2V9H0Z" fill="none" stroke="#fff" stroke-width="1.200"/><rect x="7.500" y="2.500" width="8" height="12.500" fill="none" stroke="#fff" stroke-width="1.200"/><rect x="9.500" y="5" width="4" height="8" fill="#fff"/></svg></div>
    <div class="tray-cell"><svg width="16" height="14" viewBox="0 0 16 14"><path d="M0 11H2V14H0ZM3.500 9H5.500V14H3.500ZM7 6H9V14H7ZM10.500 3H12.500V14H10.500ZM14 0H16V14H14Z" fill="#fff"/></svg></div>
    <div class="tray-cell"><svg width="16" height="16" viewBox="0 0 16 16"><path d="M0 5H3L7 1V14L3 10H0Z" fill="#fff"/><circle cx="11" cy="11" r="4.500" fill="#e0262c" stroke="#fff"/><path d="M8.500 8.500 13.500 13.500" stroke="#fff" stroke-width="1.300"/></svg></div>
    <div class="tray-cell tray-zh">中</div>
    <div class="tray-cell tray-qq"><svg width="16" height="16" viewBox="0 0 16 16"><rect width="16" height="16" rx="2" fill="#2f8df0"/><path d="M8 3C11 3 11 6 11 8 12 9 13 11 12 12 11 12 11 11 10.500 11 11 12 10 13 8 13 6 13 5 12 5.500 11 5 11 5 12 4 12 3 11 4 9 5 8 5 6 5 3 8 3Z" fill="#fff"/></svg></div>
    <div class="clock"><div>12:25</div><div>2020/4/16</div></div>
  </div>
</div>

<!-- dialog over the page -->
<div class="card dlg">
  <div class="card-header dlg-head d-flex align-items-center">
    <svg width="16" height="16" viewBox="0 0 16 16"><rect width="16" height="16" rx="3" fill="#f7a823"/><path d="M3 9 9 3 12 5 6 11Z" fill="#fff"/><path d="M3 12H13" stroke="#fff" stroke-width="1.500"/></svg>
    <span class="dlg-title">提示</span>
    <svg width="11" height="9" viewBox="0 0 11 9" class="ms-auto"><path d="M1 .5 10 8.500M10 .5 1 8.500" stroke="#fff" stroke-width="2"/></svg>
  </div>
  <div class="dlg-body d-flex align-items-center">
    <svg width="56" height="56" viewBox="0 0 56 56"><circle cx="28" cy="28" r="28" fill="#87e1ff"/><circle cx="28" cy="12" r="4.500" fill="#fff"/><rect x="23.500" y="20" width="9" height="30" rx="4.500" fill="#fff"/></svg>
    <span class="dlg-msg">选择导入的算量工程文件为空，请重新选择</span>
  </div>
  <button type="button" class="btn dlg-ok">确定</button>
</div>

<div class="ball">53</div>

</body>
</html>
